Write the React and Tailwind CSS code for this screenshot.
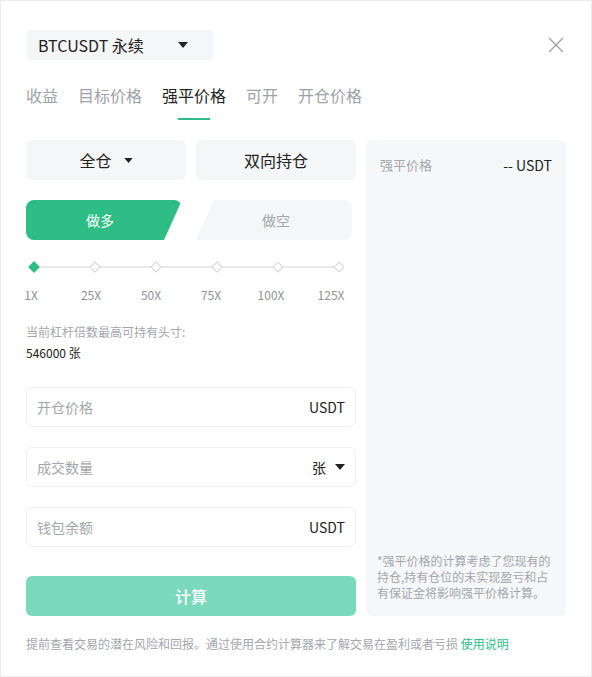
import React from 'react';

const Caret = ({ className = '' }) => (
  <svg viewBox="0 0 10 6" className={className} fill="currentColor">
    <path d="M0 0h10L5 6z" />
  </svg>
);

const tabs = ['收益', '目标价格', '强平价格', '可开', '开仓价格'];
const marks = ['1X', '25X', '50X', '75X', '100X', '125X'];

const Field = ({ label, unit, caret }) => (
  <div className="h-[40px] rounded-md border border-[#eff0f2] flex items-center justify-between pl-[10px] pr-[10px]">
    <span className="text-[14px] text-[#a3a6ab]">{label}</span>
    <span className="flex items-center gap-[9px] text-[14px] text-[#222]">
      {unit}
      {caret && <Caret className="w-[10px] h-[6px] text-[#222]" />}
    </span>
  </div>
);

export default function App() {
  return (
    <div className="w-[592px] h-[677px] bg-white border border-[#ececec] px-[25px] pt-[29px] font-['Noto_Sans_CJK_SC','Noto_Sans',sans-serif] text-[#222]">
      <div className="flex items-center justify-between">
        <div className="w-[188px] h-[30px] rounded bg-[#f5f6f8] flex items-center pl-[12px]">
          <span className="text-[16px] leading-none">BTCUSDT 永续</span>
          <Caret className="w-[10px] h-[6px] ml-[34px] text-[#222]" />
        </div>
        <button className="mr-[2px] text-[#a0a0a0]">
          <svg viewBox="0 0 16 16" className="w-[16px] h-[16px]" stroke="currentColor" strokeWidth="1.3" fill="none">
            <path d="M1 1l14 14M15 1L1 15" />
          </svg>
        </button>
      </div>

      <div className="flex gap-[20px] mt-[24px]">
        {tabs.map((t, i) => (
          <div key={t} className="flex flex-col items-center">
            <span className={`text-[16px] leading-[22px] ${i === 2 ? 'text-[#222]' : 'text-[#9da1a8]'}`}>{t}</span>
            <span className={`mt-[12px] h-[2px] w-[32px] ${i === 2 ? 'bg-[#2ebb8b]' : 'bg-transparent'}`} />
          </div>
        ))}
      </div>

      <div className="flex gap-[10px] mt-[20px]">
        <div className="w-[330px]">
          <div className="flex gap-[10px]">
            <button className="flex-1 h-[40px] rounded-md bg-[#f5f6f8] flex items-center justify-center gap-[12px] text-[16px]">
              全仓
              <Caret className="w-[9px] h-[5px] text-[#222]" />
            </button>
            <button className="flex-1 h-[40px] rounded-md bg-[#f5f6f8] flex items-center justify-center text-[16px]">
              双向持仓
            </button>
          </div>

          <div className="flex mt-[20px] gap-[14px]">
            <button className="w-[156px] h-[40px] rounded-l-lg rounded-tr-lg bg-[#2ebd85] text-white text-[14px] [clip-path:polygon(0_0,100%_0,calc(100%-18px)_100%,0_100%)] pr-[8px]">
              做多
            </button>
            <button className="w-[156px] h-[40px] rounded-r-lg bg-[#f5f6f8] text-[#a3a6ab] text-[14px] [clip-path:polygon(18px_0,100%_0,100%_100%,0_100%)] pl-[4px]">
              做空
            </button>
          </div>

          <div className="mt-[22px] ml-[4px] mr-[13px] relative h-[10px] flex items-center justify-between">
            <div className="absolute left-[5px] right-[5px] top-[4px] h-[2px] bg-[#e8e8e8]" />
            {marks.map((m, i) => (
              <span
                key={m}
                className={`relative w-[8px] h-[8px] rotate-45 ${i === 0 ? 'bg-[#2ebd85] border border-[#2ebd85]' : 'bg-white border border-[#d5d5d5]'}`}
              />
            ))}
          </div>
          <div className="flex gap-[20px] mt-[15px] -ml-[15px] text-[12px] leading-[16px] text-[#8e9196]">
            {marks.map((m) => (
              <span key={m} className="w-[40px] text-center">{m}</span>
            ))}
          </div>

          <p className="mt-[21px] text-[12px] leading-[16px] text-[#a3a6ab]">当前杠杆倍数最高可持有头寸:</p>
          <p className="mt-[5px] text-[12px] leading-[16px] text-[#222]">546000 张</p>

          <div className="mt-[26px] flex flex-col gap-[20px]">
            <Field label="开仓价格" unit="USDT" />
            <Field label="成交数量" unit="张" caret />
            <Field label="钱包余额" unit="USDT" />
          </div>

          <button className="mt-[29px] w-full h-[40px] rounded-md bg-[#7ad8bb] text-white text-[16px] font-medium">
            计算
          </button>
        </div>

        <div className="w-[200px] h-[476px] rounded-md bg-[#f6f7f9] flex flex-col justify-between pt-[15px] pb-[15px]">
          <div className="flex items-center justify-between px-[14px]">
            <span className="text-[13px] leading-[20px] text-[#a3a6ab]">强平价格</span>
            <span className="text-[14px] leading-[20px] text-[#222]">-- USDT</span>
          </div>
          <p className="pl-[11px] text-[12px] leading-[16px] text-[#a3a6ab] whitespace-nowrap">
            *强平价格的计算考虑了您现有的
            <br />
            持仓,持有仓位的未实现盈亏和占
            <br />
            有保证金将影响强平价格计算。
          </p>
        </div>
      </div>

      <p className="mt-[20px] text-[12px] leading-[16px] text-[#a3a6ab]">
        提前查看交易的潜在风险和回报。通过使用合约计算器来了解交易在盈利或者亏损 <span className="text-[#2ebd85]">使用说明</span>
      </p>
    </div>
  );
}
